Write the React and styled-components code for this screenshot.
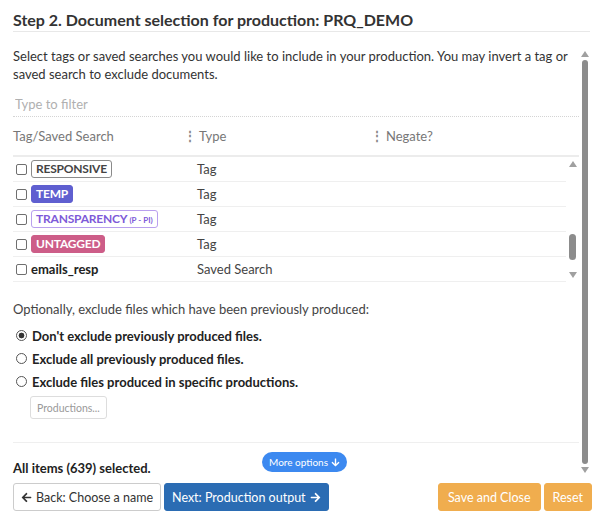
import styled, { createGlobalStyle } from "styled-components";
import { FaArrowLeft, FaArrowRight, FaArrowDown } from "react-icons/fa";

const GlobalStyle = createGlobalStyle`
  html, body {
    margin: 0;
    padding: 0;
    background: #fff;
  }
  body {
    font-family: "Lato", "Liberation Sans", sans-serif;
    color: #333;
  }
  * {
    box-sizing: border-box;
  }
`;

const Page = styled.div`
  width: 600px;
  height: 530px;
  display: flex;
  flex-direction: column;
  overflow: hidden;
`;

const Title = styled.h1`
  margin: 0 10px 0 13px;
  padding: 10px 0 1px;
  font-size: 16px;
  line-height: 20px;
  font-weight: 700;
  color: #333;
  border-bottom: 1px solid #e8e8e8;
`;

const Body = styled.div`
  position: relative;
  display: flex;
  margin-top: 15px;
  padding: 0 9px 0 13px;
  height: 430px;
`;

const Content = styled.div`
  flex: 1;
  display: flex;
  flex-direction: column;
  min-width: 0;
`;

const Intro = styled.p`
  margin: 0;
  font-size: 13px;
  line-height: 18px;
  color: #333;
`;

const Filter = styled.input`
  margin-top: 10px;
  height: 24px;
  padding: 0 2px;
  border: none;
  border-bottom: 1px dotted #d4d4d4;
  font: inherit;
  font-size: 13px;
  color: #333;
  outline: none;
  &::placeholder {
    color: #b0b0b0;
  }
`;

const HeaderRow = styled.div`
  display: grid;
  grid-template-columns: 173px 187px 1fr;
  height: 41px;
  align-items: center;
  border-bottom: 2px solid #ececec;
  font-size: 13px;
  color: #777;
`;

const HeaderCell = styled.div`
  display: flex;
  align-items: center;
  gap: 3px;
`;

const Grip = styled.span`
  font-size: 12px;
  font-weight: 700;
  color: #888;
  margin-left: -2px;
`;

const ListWrap = styled.div`
  display: flex;
`;

const Rows = styled.div`
  flex: 1;
`;

const Row = styled.div`
  display: grid;
  grid-template-columns: 173px 1fr;
  height: 25px;
  align-items: center;
  border-bottom: 1px solid #efefef;
  font-size: 13px;
`;

const NameCell = styled.div`
  display: flex;
  align-items: center;
  gap: 4px;
  padding-left: 3px;
`;

const TypeCell = styled.div`
  padding-left: 11px;
  color: #444;
`;

const Check = styled.input.attrs({ type: "checkbox" })`
  appearance: none;
  margin: 0;
  width: 11px;
  height: 11px;
  border: 1px solid #6f6f6f;
  border-radius: 2px;
  background: #fff;
`;

const Tag = styled.span`
  display: inline-flex;
  align-items: baseline;
  height: 18px;
  line-height: 16px;
  padding: 0 4px;
  border-radius: 3px;
  font-size: 12px;
  font-weight: 700;
  letter-spacing: -0.2px;
  border: 1px solid ${(p) => p.$border || p.$bg};
  background: ${(p) => p.$bg || "#fff"};
  color: ${(p) => p.$color};
`;

const TagNote = styled.small`
  font-size: 8px;
  margin-left: 2px;
  font-weight: 700;
  letter-spacing: 0;
`;

const SearchName = styled.span`
  font-weight: 700;
  color: #222;
`;

const Bar = styled.div`
  width: ${(p) => p.$width}px;
  display: flex;
  flex-direction: column;
  align-items: center;
  flex-shrink: 0;
`;

const Arrow = styled.span`
  width: 0;
  height: 0;
  margin: ${(p) => (p.$down ? "3px 0 4px" : "4px 0 3px")};
  border-left: 4px solid transparent;
  border-right: 4px solid transparent;
  ${(p) =>
    p.$down
      ? "border-top: 6px solid #a0a0a0;"
      : "border-bottom: 6px solid #a0a0a0;"}
`;

const Track = styled.div`
  flex: 1;
  width: 100%;
  display: flex;
  justify-content: center;
  padding-top: ${(p) => p.$offset}px;
`;

const Thumb = styled.div`
  width: ${(p) => p.$thick}px;
  height: ${(p) => (p.$size ? `${p.$size}px` : "100%")};
  border-radius: 4px;
  background: #8c8c8c;
`;

const Scrollbar = ({ width, thick, offset, size }) => (
  <Bar $width={width}>
    <Arrow />
    <Track $offset={offset}>
      <Thumb $thick={thick} $size={size} />
    </Track>
    <Arrow $down />
  </Bar>
);

const Options = styled.div`
  margin-top: 18px;
  font-size: 13px;
`;

const OptionsLead = styled.p`
  margin: 0 0 6px;
  line-height: 18px;
  color: #444;
`;

const RadioRow = styled.label`
  display: flex;
  align-items: center;
  gap: 5px;
  height: 23px;
  padding-left: 3px;
  font-weight: 700;
  color: #222;
`;

const Radio = styled.input.attrs({ type: "radio", name: "exclude" })`
  appearance: none;
  margin: 0;
  width: 11px;
  height: 11px;
  border-radius: 50%;
  border: 1px solid #555;
  background: #fff;
  &:checked {
    background: radial-gradient(circle, #333 0 2.6px, #fff 3.2px);
  }
`;

const SmallButton = styled.button`
  align-self: flex-start;
  margin: 3px 0 0 17px;
  height: 23px;
  padding: 0 6px;
  border: 1px solid #ddd;
  border-radius: 3px;
  background: #fff;
  font: inherit;
  font-size: 10.5px;
  color: #999;
`;

const Divider = styled.hr`
  width: 100%;
  margin: 23px 0 0;
  border: none;
  border-top: 1px solid #efefef;
`;

const Summary = styled.div`
  margin-top: 16px;
  font-size: 13px;
  line-height: 18px;
  font-weight: 700;
  color: #222;
`;

const MoreOptions = styled.button`
  position: absolute;
  left: 262px;
  top: 405px;
  height: 20px;
  padding: 0 7px;
  border: none;
  border-radius: 10px;
  background: #3c89f0;
  color: #fff;
  font: inherit;
  font-size: 10px;
  display: flex;
  align-items: center;
  gap: 3px;
`;

const Footer = styled.div`
  display: flex;
  align-items: center;
  gap: 3px;
  margin-top: 6px;
  padding: 0 8px 0 13px;
`;

const Button = styled.button`
  height: 28px;
  padding: 0 ${(p) => p.$pad || 7}px;
  border-radius: 3px;
  font: inherit;
  font-size: 12.5px;
  display: flex;
  align-items: center;
  gap: 4px;
  border: 1px solid ${(p) => p.$border || p.$bg};
  background: ${(p) => p.$bg};
  color: ${(p) => p.$color || "#fff"};
  ${(p) => p.$push && "margin-left: auto;"}
`;

const tags = [
  { name: "RESPONSIVE", border: "#8a8a8a", color: "#444" },
  { name: "TEMP", bg: "#5f5fd0", color: "#fff" },
  { name: "TRANSPARENCY", note: "(P - PI)", border: "#b9a0ee", color: "#7e5ad8" },
  { name: "UNTAGGED", bg: "#cd5d88", color: "#fff" },
];

const exclusions = [
  "Don't exclude previously produced files.",
  "Exclude all previously produced files.",
  "Exclude files produced in specific productions.",
];

export default function App() {
  return (
    <Page>
      <GlobalStyle />
      <Title>Step 2. Document selection for production: PRQ_DEMO</Title>
      <Body>
        <Content>
          <Intro>
            Select tags or saved searches you would like to include in your
            production. You may invert a tag or saved search to exclude
            documents.
          </Intro>
          <Filter placeholder="Type to filter" />
          <HeaderRow>
            <HeaderCell>Tag/Saved Search</HeaderCell>
            <HeaderCell>
              <Grip>⋮</Grip>Type
            </HeaderCell>
            <HeaderCell>
              <Grip>⋮</Grip>Negate?
            </HeaderCell>
          </HeaderRow>
          <ListWrap>
            <Rows>
              {tags.map((t) => (
                <Row key={t.name}>
                  <NameCell>
                    <Check />
                    <Tag $bg={t.bg} $border={t.border} $color={t.color}>
                      {t.name}
                      {t.note && <TagNote>{t.note}</TagNote>}
                    </Tag>
                  </NameCell>
                  <TypeCell>Tag</TypeCell>
                </Row>
              ))}
              <Row>
                <NameCell>
                  <Check />
                  <SearchName>emails_resp</SearchName>
                </NameCell>
                <TypeCell>Saved Search</TypeCell>
              </Row>
            </Rows>
            <Scrollbar width={13} thick={7} offset={64} size={26} />
          </ListWrap>
          <Options>
            <OptionsLead>
              Optionally, exclude files which have been previously produced:
            </OptionsLead>
            {exclusions.map((label, i) => (
              <RadioRow key={label}>
                <Radio defaultChecked={i === 0} />
                {label}
              </RadioRow>
            ))}
          </Options>
          <SmallButton>Productions...</SmallButton>
          <Divider />
          <Summary>All items (639) selected.</Summary>
        </Content>
        <Scrollbar width={12} thick={6} offset={0} />
        <MoreOptions>
          More options <FaArrowDown size={9} />
        </MoreOptions>
      </Body>
      <Footer>
        <Button $bg="#fff" $border="#ccc" $color="#333">
          <FaArrowLeft size={11} /> Back: Choose a name
        </Button>
        <Button $bg="#2b6cb3">
          Next: Production output <FaArrowRight size={11} />
        </Button>
        <Button $bg="#f0ad4e" $push $pad={9}>
          Save and Close
        </Button>
        <Button $bg="#f0ad4e" $pad={8}>
          Reset
        </Button>
      </Footer>
    </Page>
  );
}
